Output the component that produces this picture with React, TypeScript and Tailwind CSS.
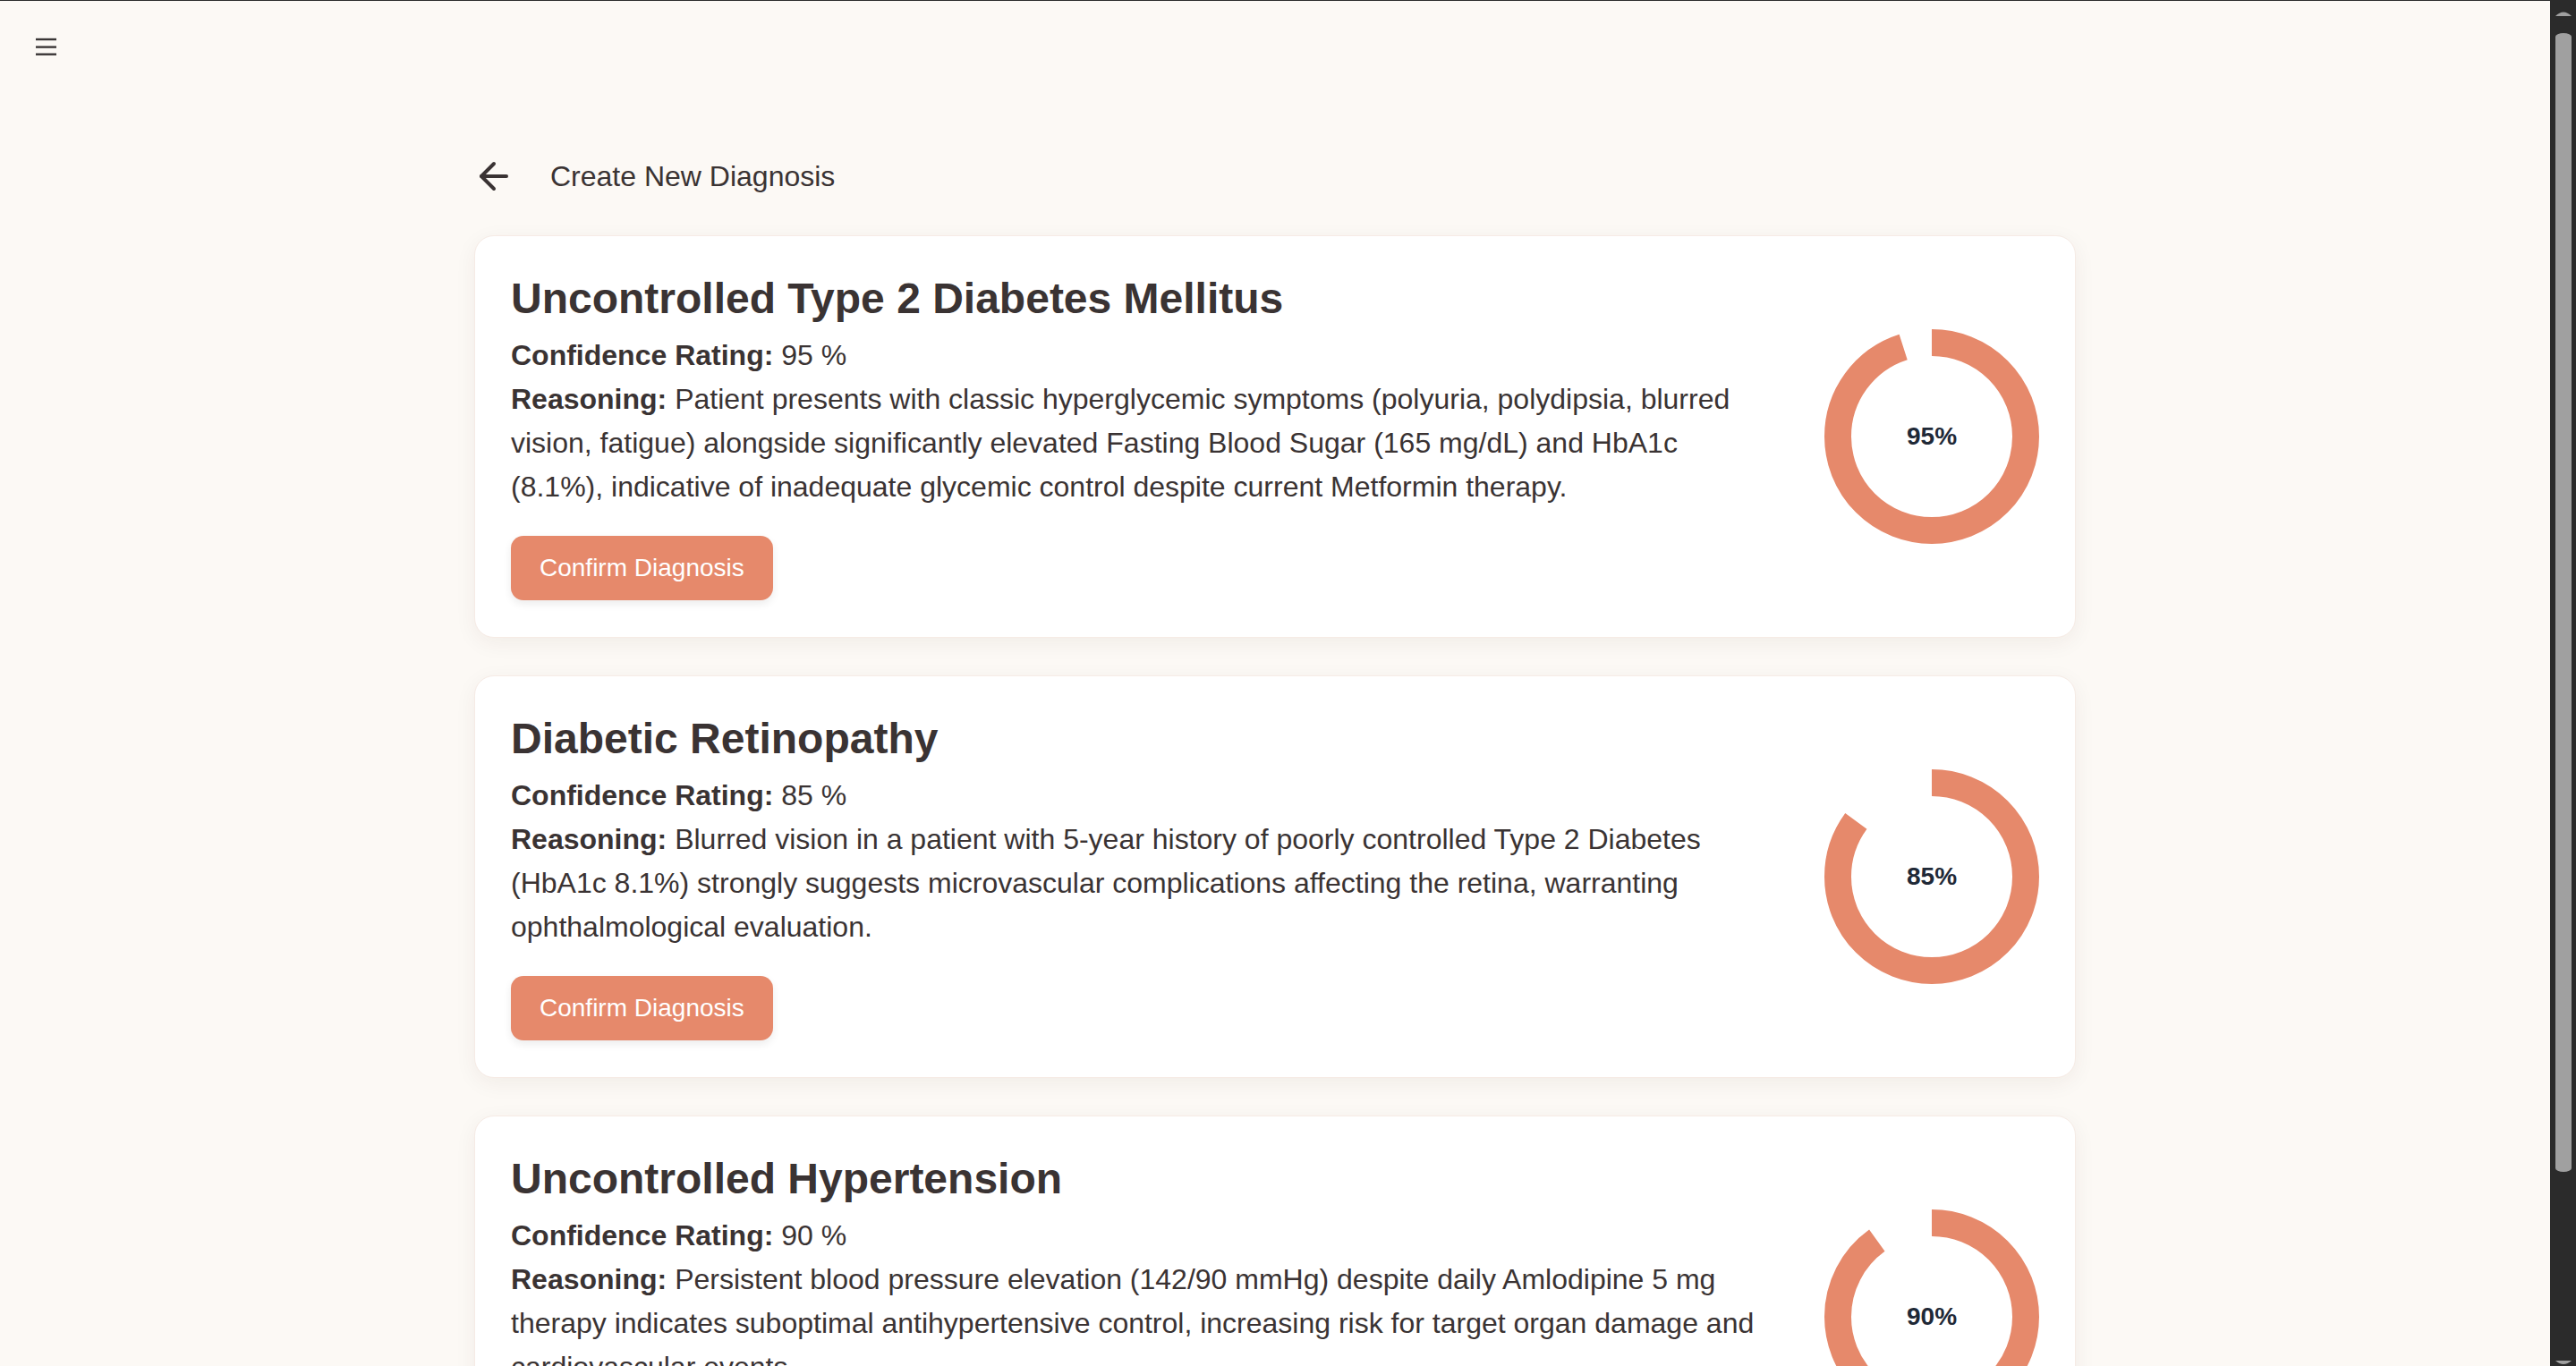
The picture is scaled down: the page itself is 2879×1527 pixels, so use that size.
import React from 'react'
import { ArrowLeft } from 'lucide-react'

const diagnoses = [
  {
    title: 'Uncontrolled Type 2 Diabetes Mellitus',
    confidence: 95,
    reasoning:
      'Patient presents with classic hyperglycemic symptoms (polyuria, polydipsia, blurred vision, fatigue) alongside significantly elevated Fasting Blood Sugar (165 mg/dL) and HbA1c (8.1%), indicative of inadequate glycemic control despite current Metformin therapy.'
  },
  {
    title: 'Diabetic Retinopathy',
    confidence: 85,
    reasoning:
      'Blurred vision in a patient with 5-year history of poorly controlled Type 2 Diabetes (HbA1c 8.1%) strongly suggests microvascular complications affecting the retina, warranting ophthalmological evaluation.'
  },
  {
    title: 'Uncontrolled Hypertension',
    confidence: 90,
    reasoning:
      'Persistent blood pressure elevation (142/90 mmHg) despite daily Amlodipine 5 mg therapy indicates suboptimal antihypertensive control, increasing risk for target organ damage and cardiovascular events.'
  }
]

function Donut({ value }: { value: number }) {
  const r = 105
  const c = 2 * Math.PI * r
  return (
    <div className="relative h-[240px] w-[240px] shrink-0">
      <svg width="240" height="240" viewBox="0 0 240 240" className="-rotate-90">
        <circle
          cx="120"
          cy="120"
          r={r}
          fill="none"
          stroke="#e6896b"
          strokeWidth="30"
          strokeDasharray={`${(c * value) / 100} ${c}`}
        />
      </svg>
      <div className="absolute inset-0 flex items-center justify-center text-[28px] font-bold text-[#1f2937]">
        {value}%
      </div>
    </div>
  )
}

function DiagnosisCard({ title, confidence, reasoning }: { title: string; confidence: number; reasoning: string }) {
  return (
    <div className="flex items-center gap-[70px] rounded-[22px] border border-[#f6ebe5] bg-white px-[40px] pt-[40px] pb-[41px] shadow-[0_6px_24px_rgba(60,30,10,0.06)]">
      <div className="min-w-0 flex-1">
        <h2 className="mb-[9px] text-[48px] font-bold leading-[60px] text-[#3a3333]">{title}</h2>
        <p className="text-[32px] leading-[49px] text-[#3a3333]">
          <span className="font-bold">Confidence Rating:</span> {confidence} %
        </p>
        <p className="text-[32px] leading-[49px] text-[#3a3333]">
          <span className="font-bold">Reasoning:</span> {reasoning}
        </p>
        <button className="mt-[30px] flex h-[72px] items-center rounded-[14px] bg-[#e6896b] px-[32px] text-[28px] text-white shadow-[0_4px_10px_rgba(0,0,0,0.08)]">
          Confirm Diagnosis
        </button>
      </div>
      <Donut value={confidence} />
    </div>
  )
}

function Scrollbar() {
  return (
    <div className="flex w-[29px] shrink-0 flex-col bg-[#2b2b2b] pl-[6px]">
      <svg width="18" height="8" viewBox="0 0 18 8" className="mt-[11px]">
        <path d="M0 7 Q9 -2 18 7 Z" fill="#a0a0a0" />
      </svg>
      <div className="mt-[18px] h-[1273px] w-[18px] rounded-[9px/4px] bg-[#a0a0a0]" />
      <div className="flex-1" />
      <svg width="18" height="6" viewBox="0 0 18 6">
        <path d="M0 0 Q9 8 18 0 Z" fill="#a0a0a0" />
      </svg>
    </div>
  )
}

export default function App() {
  return (
    <div className="flex h-[1527px] overflow-hidden bg-[#fcf9f5] font-['Liberation_Sans',Arial,sans-serif]">
      <div className="flex min-w-0 flex-1 flex-col border-t border-[#2d2d2d]">
        <div className="pl-[40px] pt-[41px]">
          <svg width="23" height="21" viewBox="0 0 23 21">
            <g stroke="#3a3636" strokeWidth="2.4">
              <line x1="0" y1="2" x2="23" y2="2" />
              <line x1="0" y1="10.6" x2="23" y2="10.6" />
              <line x1="0" y1="18.7" x2="23" y2="18.7" />
            </g>
          </svg>
        </div>
        <main className="mx-auto w-[1790px]">
          <div className="mt-[110px] flex items-center gap-[39px]">
            <ArrowLeft size={48} strokeWidth={2} className="-ml-[2px] text-[#3a3333]" />
            <span className="text-[32px] text-[#3a3333]">Create New Diagnosis</span>
          </div>
          <div className="mt-[42px] flex flex-col gap-[42px]">
            {diagnoses.map(d => (
              <DiagnosisCard key={d.title} {...d} />
            ))}
          </div>
        </main>
      </div>
      <Scrollbar />
    </div>
  )
}
